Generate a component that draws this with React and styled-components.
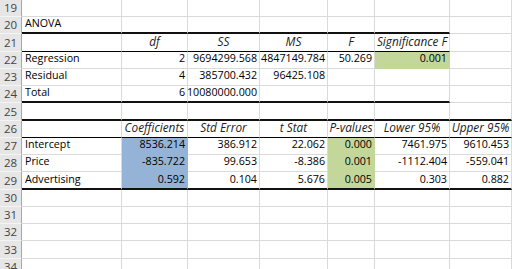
import React from "react";
import styled, { createGlobalStyle, css } from "styled-components";

const Global = createGlobalStyle`
  html, body { margin: 0; padding: 0; background: #fff; overflow: hidden; }
  body { font-family: "Open Sans", "Liberation Sans", sans-serif; }
`;

const COLS = [22, 100, 66, 72, 68, 47, 75, 62];
const HEIGHTS = { 21: 18, 25: 18, 29: 18, 33: 18 };

const Sheet = styled.div`
  display: grid;
  grid-template-columns: ${COLS.map((c) => c + "px").join(" ")};
  width: 512px;
  height: 269px;
  overflow: hidden;
  align-content: start;
`;

const RowHead = styled.div`
  box-sizing: border-box;
  height: ${(p) => p.$h}px;
  background: #e6e6e6;
  border-right: 1px solid #a8a8a8;
  border-bottom: 1px solid #f4f4f4;
  color: #444;
  font-size: 11.5px;
  line-height: 13px;
  display: flex;
  align-items: flex-end;
  justify-content: center;
  padding-bottom: 2px;
`;

const edge = {
  grid: "1px solid #dadada",
  thin: "1px solid #000",
  thick: "2px solid #111",
};

const Cell = styled.div`
  box-sizing: border-box;
  height: ${(p) => p.$h}px;
  border-right: 1px solid ${(p) => (p.$fill ? "transparent" : "#dadada")};
  border-bottom: ${(p) =>
    p.$bottom ? edge[p.$bottom] : p.$fill ? "1px solid transparent" : edge.grid};
  background: ${(p) => p.$fill || "#fff"};
  color: #000;
  font-size: 10.7px;
  line-height: 13px;
  white-space: nowrap;
  display: flex;
  align-items: flex-end;
  padding: 0 2px ${(p) => (p.$bottom === "thick" ? 2 : 3)}px 3px;
  justify-content: ${(p) =>
    p.$align === "right" ? "flex-end" : p.$align === "center" ? "center" : "flex-start"};
  ${(p) =>
    p.$italic &&
    css`
      font-style: italic;
      font-size: 11.8px;
      color: #222;
      padding-left: 0;
      padding-right: 0;
    `}
`;

const GREEN = "#c4d79b";
const BLUE = "#95b3d7";

const rows = [
  { n: 19, cells: [] },
  { n: 20, cells: ["ANOVA"], bottom: { cols: 6, kind: "thick" } },
  {
    n: 21,
    cells: ["", "df", "SS", "MS", "F", "Significance F"],
    header: true,
    bottom: { cols: 6, kind: "thin" },
  },
  {
    n: 22,
    cells: ["Regression", "2", "9694299.568", "4847149.784", "50.269", "0.001"],
    fills: { 5: GREEN },
  },
  { n: 23, cells: ["Residual", "4", "385700.432", "96425.108"] },
  { n: 24, cells: ["Total", "6", "10080000.000"], bottom: { cols: 6, kind: "thick" } },
  { n: 25, cells: [], bottom: { cols: 7, kind: "thick" } },
  {
    n: 26,
    cells: ["", "Coefficients", "Std Error", "t Stat", "P-values", "Lower 95%", "Upper 95%"],
    header: true,
    bottom: { cols: 7, kind: "thin" },
  },
  {
    n: 27,
    cells: ["Intercept", "8536.214", "386.912", "22.062", "0.000", "7461.975", "9610.453"],
    fills: { 1: BLUE, 4: GREEN },
  },
  {
    n: 28,
    cells: ["Price", "-835.722", "99.653", "-8.386", "0.001", "-1112.404", "-559.041"],
    fills: { 1: BLUE, 4: GREEN },
  },
  {
    n: 29,
    cells: ["Advertising", "0.592", "0.104", "5.676", "0.005", "0.303", "0.882"],
    fills: { 1: BLUE, 4: GREEN },
    bottom: { cols: 7, kind: "thick" },
  },
  { n: 30, cells: [] },
  { n: 31, cells: [] },
  { n: 32, cells: [] },
  { n: 33, cells: [] },
  { n: 34, cells: [] },
];

export default function App() {
  return (
    <>
      <Global />
      <Sheet>
        {rows.map((r) => {
          const h = HEIGHTS[r.n] || 17;
          const out = [
            <RowHead key={r.n + "h"} $h={h}>
              {r.n}
            </RowHead>,
          ];
          for (let c = 0; c < 7; c++) {
            const text = r.cells[c] || "";
            const bottom = r.bottom && c < r.bottom.cols ? r.bottom.kind : null;
            const align = r.header ? "center" : c === 0 ? "left" : "right";
            out.push(
              <Cell
                key={r.n + "-" + c}
                $h={h}
                $bottom={bottom}
                $align={align}
                $italic={r.header}
                $fill={r.fills ? r.fills[c] : undefined}
              >
                {text}
              </Cell>
            );
          }
          return out;
        })}
      </Sheet>
    </>
  );
}
